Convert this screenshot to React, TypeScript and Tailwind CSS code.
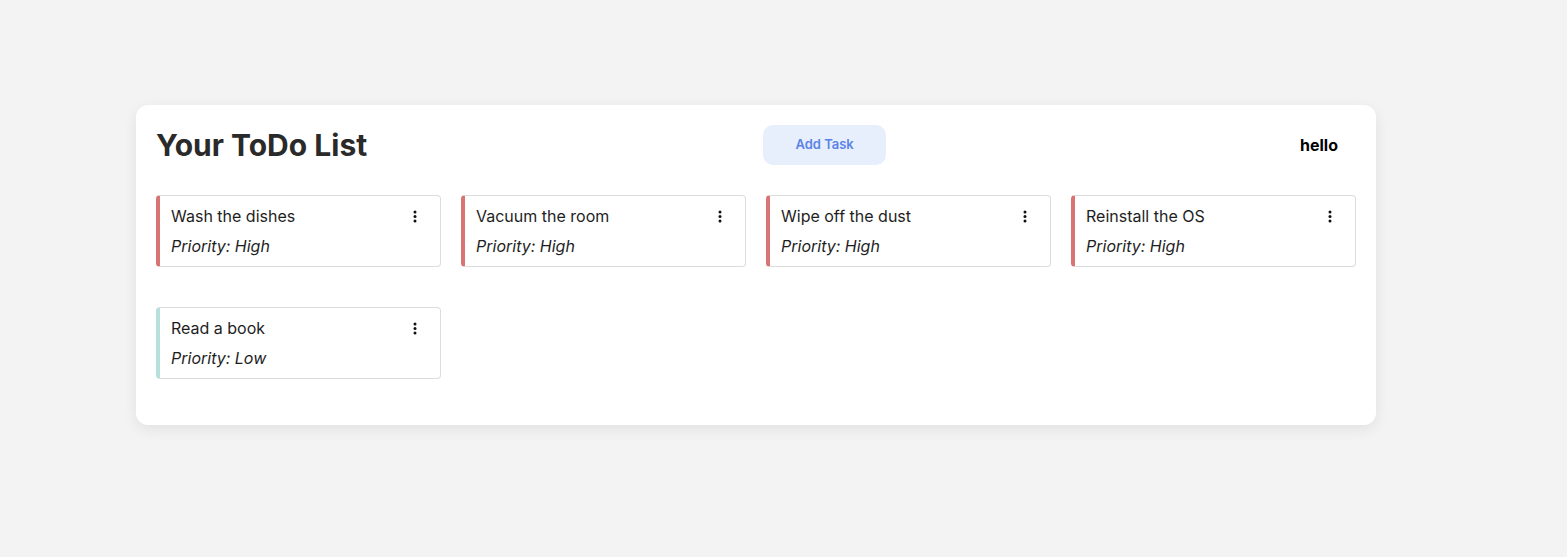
import React from "react"

type Task = { id: number; title: string; priority: "High" | "Low" }

const tasks: Task[] = [
  { id: 1, title: "Wash the dishes", priority: "High" },
  { id: 2, title: "Vacuum the room", priority: "High" },
  { id: 3, title: "Wipe off the dust", priority: "High" },
  { id: 4, title: "Reinstall the OS", priority: "High" },
  { id: 5, title: "Read a book", priority: "Low" },
]

const KebabIcon = () => (
  <svg width="4" height="13" viewBox="0 0 4 13" fill="#111">
    <circle cx="2" cy="2" r="1.5" />
    <circle cx="2" cy="6.5" r="1.5" />
    <circle cx="2" cy="11" r="1.5" />
  </svg>
)

const TaskCard = ({ task }: { task: Task }) => (
  <div
    className={`relative h-[72px] rounded-[4px] border border-[#dcdcdc] border-l-4 bg-white pl-[11px] pr-[20px] pt-[9px] ${
      task.priority === "High" ? "border-l-[#d97474]" : "border-l-[#b7e0dc]"
    }`}
  >
    <div className="flex items-center justify-between">
      <span className="text-[16px] leading-[22px] text-[#1e1e1e]">{task.title}</span>
      <button className="flex h-[22px] w-[10px] items-center justify-center">
        <KebabIcon />
      </button>
    </div>
    <p className="mt-[7px] text-[16px] italic leading-[24px] text-[#1e1e1e]">Priority: {task.priority}</p>
  </div>
)

export default function App() {
  return (
    <div className="min-h-[557px] bg-[#f3f3f3] pt-[105px] font-['Inter',sans-serif]">
      <div className="ml-[136px] w-[1240px] rounded-[12px] bg-white px-5 pt-5 pb-[46px] shadow-[0_4px_14px_rgba(0,0,0,0.08)]">
        {/* Header */}
        <div className="flex h-10 items-center justify-between">
          <h1 className="text-[30px] font-bold leading-10 text-[#2a2a2a]">Your ToDo List</h1>
          <button className="h-10 w-[123px] rounded-[10px] bg-[#e7effc] text-[13px] font-semibold text-[#5b82e6]">
            Add Task
          </button>
          <button className="w-[74px] text-[16px] font-bold text-black">hello</button>
        </div>

        {/* Tasks */}
        <div className="mt-[30px] grid grid-cols-4 gap-x-5 gap-y-10">
          {tasks.map((t) => (
            <TaskCard key={t.id} task={t} />
          ))}
        </div>
      </div>
    </div>
  )
}
